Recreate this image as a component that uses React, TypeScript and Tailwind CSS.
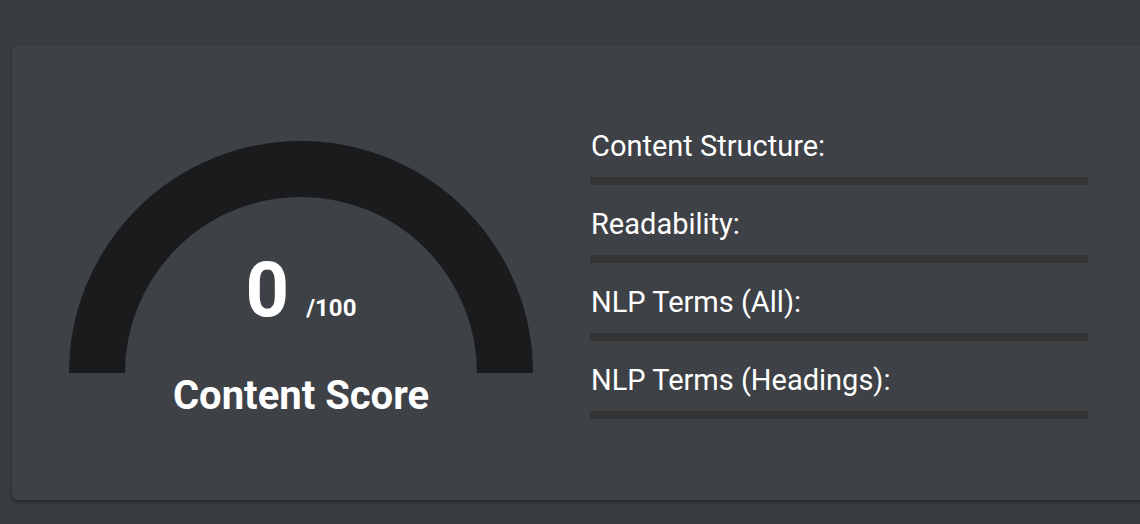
export default function App() {
  const metrics = ["Content Structure:", "Readability:", "NLP Terms (All):", "NLP Terms (Headings):"];

  return (
    <div
      className="w-[1140px] h-[524px] overflow-hidden bg-[#383b40] pt-[45px]"
      style={{ fontFamily: "Roboto, 'Noto Sans', Arial, sans-serif" }}
    >
      <div className="ml-3 w-[1160px] h-[455px] rounded-md bg-[#3e4146] shadow-[0_2px_3px_rgba(0,0,0,0.35)] flex">
        {/* gauge */}
        <div className="ml-[57px] mt-[96px] w-[464px] flex flex-col items-center">
          <div className="relative w-[464px] h-[232px]">
            <svg width="464" height="232" viewBox="0 0 464 232">
              <path d="M 28 232 A 204 204 0 0 1 436 232" fill="none" stroke="#1a1b1d" strokeWidth="56" />
            </svg>
            <div className="absolute top-[111px] left-0 right-0 flex justify-center items-baseline text-white font-bold">
              <span className="text-[76px] leading-none">0</span>
              <span className="ml-[17px] text-[24px] leading-none">/100</span>
            </div>
          </div>
          <div className="text-white font-bold text-[40px] leading-[46px]">Content Score</div>
        </div>

        {/* metrics */}
        <div className="ml-[57px] mt-[85px] w-[498px] flex flex-col">
          {metrics.map((m, i) => (
            <div key={i} className={i > 0 ? "mt-[23px]" : ""}>
              <div className="text-white text-[29px] leading-[32px] pl-px">{m}</div>
              <div className="mt-[15px] h-2 bg-[#343434]" />
            </div>
          ))}
        </div>
      </div>
    </div>
  );
}
